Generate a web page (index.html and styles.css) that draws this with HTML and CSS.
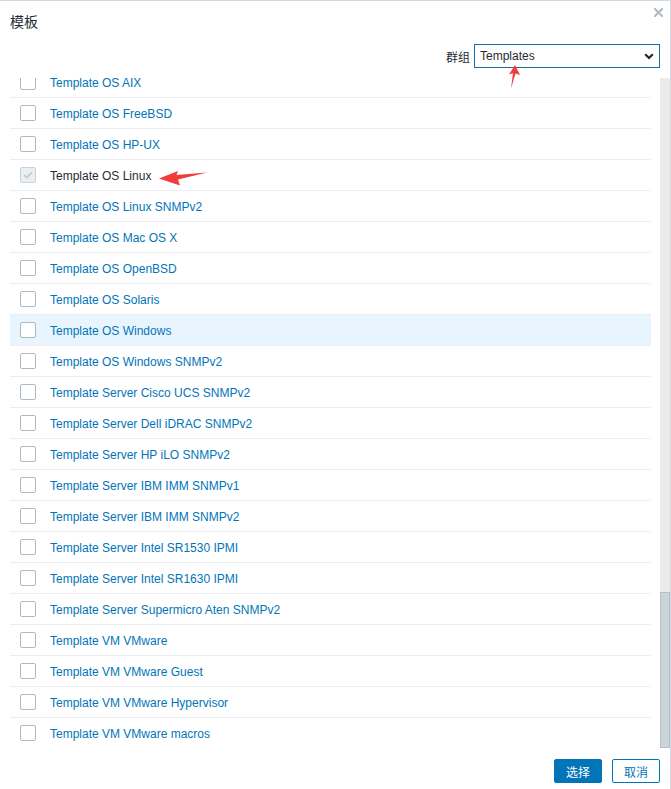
FILE: index.html
```html
<!DOCTYPE html>
<html lang="zh">
<head>
    <meta charset="UTF-8">
    <meta name="viewport" content="width=device-width, initial-scale=1.0">
    <title>模板</title>
    <link rel="stylesheet" href="styles.css">
</head>
<body>
    <div class="dialog">
        <div class="dialog-head">
            <h4 class="dialog-title">模板</h4>
            <button type="button" class="btn-close" title="关闭">
                <svg width="9" height="9" viewBox="0 0 9 9"><path d="M1 1L8 8M8 1L1 8" stroke="#b4bcc0" stroke-width="2.2" stroke-linecap="square"/></svg>
            </button>
        </div>

        <div class="filter">
            <label for="groupid" class="filter-label">群组</label>
            <div class="select-wrap">
                <select id="groupid" class="select">
                    <option selected>Templates</option>
                </select>
                <svg class="select-arrow" width="10" height="7" viewBox="0 0 10 7"><path d="M1.2 1.2L5 5L8.8 1.2" fill="none" stroke="#1f2c33" stroke-width="2.2"/></svg>
            </div>
        </div>

        <div class="dialog-body">
            <div class="list">
                <div class="row"><span class="check"></span><a class="name" href="#">Template OS AIX</a></div>
                <div class="row"><span class="check"></span><a class="name" href="#">Template OS FreeBSD</a></div>
                <div class="row"><span class="check"></span><a class="name" href="#">Template OS HP-UX</a></div>
                <div class="row disabled">
                    <span class="check checked"><svg width="10" height="8" viewBox="0 0 10 8"><path d="M1 4L3.8 6.6L9 1.2" fill="none" stroke="#bfc8cd" stroke-width="1.6"/></svg></span>
                    <span class="name">Template OS Linux</span>
                </div>
                <div class="row"><span class="check"></span><a class="name" href="#">Template OS Linux SNMPv2</a></div>
                <div class="row"><span class="check"></span><a class="name" href="#">Template OS Mac OS X</a></div>
                <div class="row"><span class="check"></span><a class="name" href="#">Template OS OpenBSD</a></div>
                <div class="row"><span class="check"></span><a class="name" href="#">Template OS Solaris</a></div>
                <div class="row hover"><span class="check"></span><a class="name" href="#">Template OS Windows</a></div>
                <div class="row"><span class="check"></span><a class="name" href="#">Template OS Windows SNMPv2</a></div>
                <div class="row"><span class="check"></span><a class="name" href="#">Template Server Cisco UCS SNMPv2</a></div>
                <div class="row"><span class="check"></span><a class="name" href="#">Template Server Dell iDRAC SNMPv2</a></div>
                <div class="row"><span class="check"></span><a class="name" href="#">Template Server HP iLO SNMPv2</a></div>
                <div class="row"><span class="check"></span><a class="name" href="#">Template Server IBM IMM SNMPv1</a></div>
                <div class="row"><span class="check"></span><a class="name" href="#">Template Server IBM IMM SNMPv2</a></div>
                <div class="row"><span class="check"></span><a class="name" href="#">Template Server Intel SR1530 IPMI</a></div>
                <div class="row"><span class="check"></span><a class="name" href="#">Template Server Intel SR1630 IPMI</a></div>
                <div class="row"><span class="check"></span><a class="name" href="#">Template Server Supermicro Aten SNMPv2</a></div>
                <div class="row"><span class="check"></span><a class="name" href="#">Template VM VMware</a></div>
                <div class="row"><span class="check"></span><a class="name" href="#">Template VM VMware Guest</a></div>
                <div class="row"><span class="check"></span><a class="name" href="#">Template VM VMware Hypervisor</a></div>
                <div class="row"><span class="check"></span><a class="name" href="#">Template VM VMware macros</a></div>
            </div>
            <div class="scrollbar"><div class="scrollbar-thumb"></div></div>
        </div>

        <div class="dialog-foot">
            <button type="button" class="btn">选择</button>
            <button type="button" class="btn btn-alt">取消</button>
        </div>

        <!-- annotation arrows from the screenshot -->
        <svg class="marks" width="671" height="789" viewBox="0 0 671 789">
            <polygon points="515,65 520,75 515.5,73.5 511,88.5 513,73.2 509,74.5" fill="#f23b3b"/>
            <polygon points="159,178.5 178,171 176.5,175 207,172.5 178,179.5 180,185.5" fill="#f23b3b"/>
        </svg>
    </div>
</body>
</html>
```

FILE: styles.css
```css
/* General */
body {
    margin: 0;
    font-family: "Liberation Sans", Arial, "Noto Sans CJK SC", sans-serif;
    font-size: 12px;
    color: #1f2c33;
    background: #ffffff;
}

.dialog {
    position: relative;
    width: 671px;
    height: 789px;
    box-sizing: border-box;
    border-top: 1px solid #d3d9dd;
    border-right: 1px solid #d3d9dd;
    display: flex;
    flex-direction: column;
    overflow: hidden;
}

/* Header */
.dialog-head {
    position: relative;
    height: 42px;
    padding: 0 10px;
    flex: none;
}

.dialog-title {
    margin: 0;
    line-height: 42px;
    font-size: 14px;
    font-weight: normal;
    color: #1f2c33;
}

.btn-close {
    position: absolute;
    top: 7px;
    right: 7px;
    padding: 0;
    width: 9px;
    height: 9px;
    border: none;
    background: none;
    cursor: pointer;
    display: flex;
}

/* Group filter */
.filter {
    flex: none;
    display: flex;
    justify-content: flex-end;
    align-items: center;
    padding: 1px 10px 10px;
}

.filter-label {
    margin-right: 4px;
    color: #1f2c33;
}

.select-wrap {
    position: relative;
    display: flex;
}

.select {
    appearance: none;
    -webkit-appearance: none;
    width: 186px;
    height: 24px;
    box-sizing: border-box;
    margin: 0;
    padding: 0 22px 0 5px;
    border: 1px solid #1b6a9e;
    border-radius: 0;
    background: #ffffff;
    font-family: inherit;
    font-size: 12px;
    color: #1f2c33;
    outline: none;
}

.select-arrow {
    position: absolute;
    right: 6px;
    top: 9px;
    pointer-events: none;
}

/* Template list, scrolled to its end */
.dialog-body {
    flex: 1;
    min-height: 0;
    display: flex;
}

.list {
    flex: 1;
    min-width: 0;
    overflow: hidden;
    display: flex;
    flex-direction: column;
    justify-content: flex-end;
    padding: 0 9px 0 10px;
}

.scrollbar {
    width: 10px;
    flex: none;
    background: #ebebeb;
    display: flex;
    flex-direction: column;
    justify-content: flex-end;
}

.scrollbar-thumb {
    height: 156px;
    box-sizing: border-box;
    background: #cad4d9;
    border: 1px solid #b3c0c7;
}

.row {
    display: flex;
    align-items: center;
    flex: none;
    height: 30px;
    padding-left: 10px;
    border-bottom: 1px solid #ebeef0;
}

.row:last-child {
    border-bottom: none;
}

.row.hover {
    background: #e8f5ff;
}

.check {
    width: 16px;
    height: 16px;
    box-sizing: border-box;
    margin-right: 14px;
    border: 1px solid #acbbc2;
    border-radius: 2px;
    background: #ffffff;
    display: flex;
    align-items: center;
    justify-content: center;
    flex: none;
}

.check.checked {
    background: #ebeef0;
    border-color: #c9d2d6;
}

.name {
    padding-top: 2px;
    color: #0275b8;
    text-decoration: none;
    white-space: nowrap;
}

.row.disabled .name {
    color: #1f2c33;
}

/* Footer */
.dialog-foot {
    flex: none;
    height: 41px;
    box-sizing: border-box;
    display: flex;
    justify-content: flex-end;
    align-items: flex-start;
    gap: 10px;
    padding: 11px 10px 0;
}

.btn {
    height: 24px;
    padding: 0 11px;
    border: 1px solid #0275b8;
    border-radius: 2px;
    background: #0275b8;
    color: #ffffff;
    font-family: inherit;
    font-size: 12px;
    cursor: pointer;
}

.btn-alt {
    background: #ffffff;
    color: #0275b8;
}

/* Annotation overlay */
.marks {
    position: absolute;
    top: -1px;
    left: 0;
    pointer-events: none;
}
```
